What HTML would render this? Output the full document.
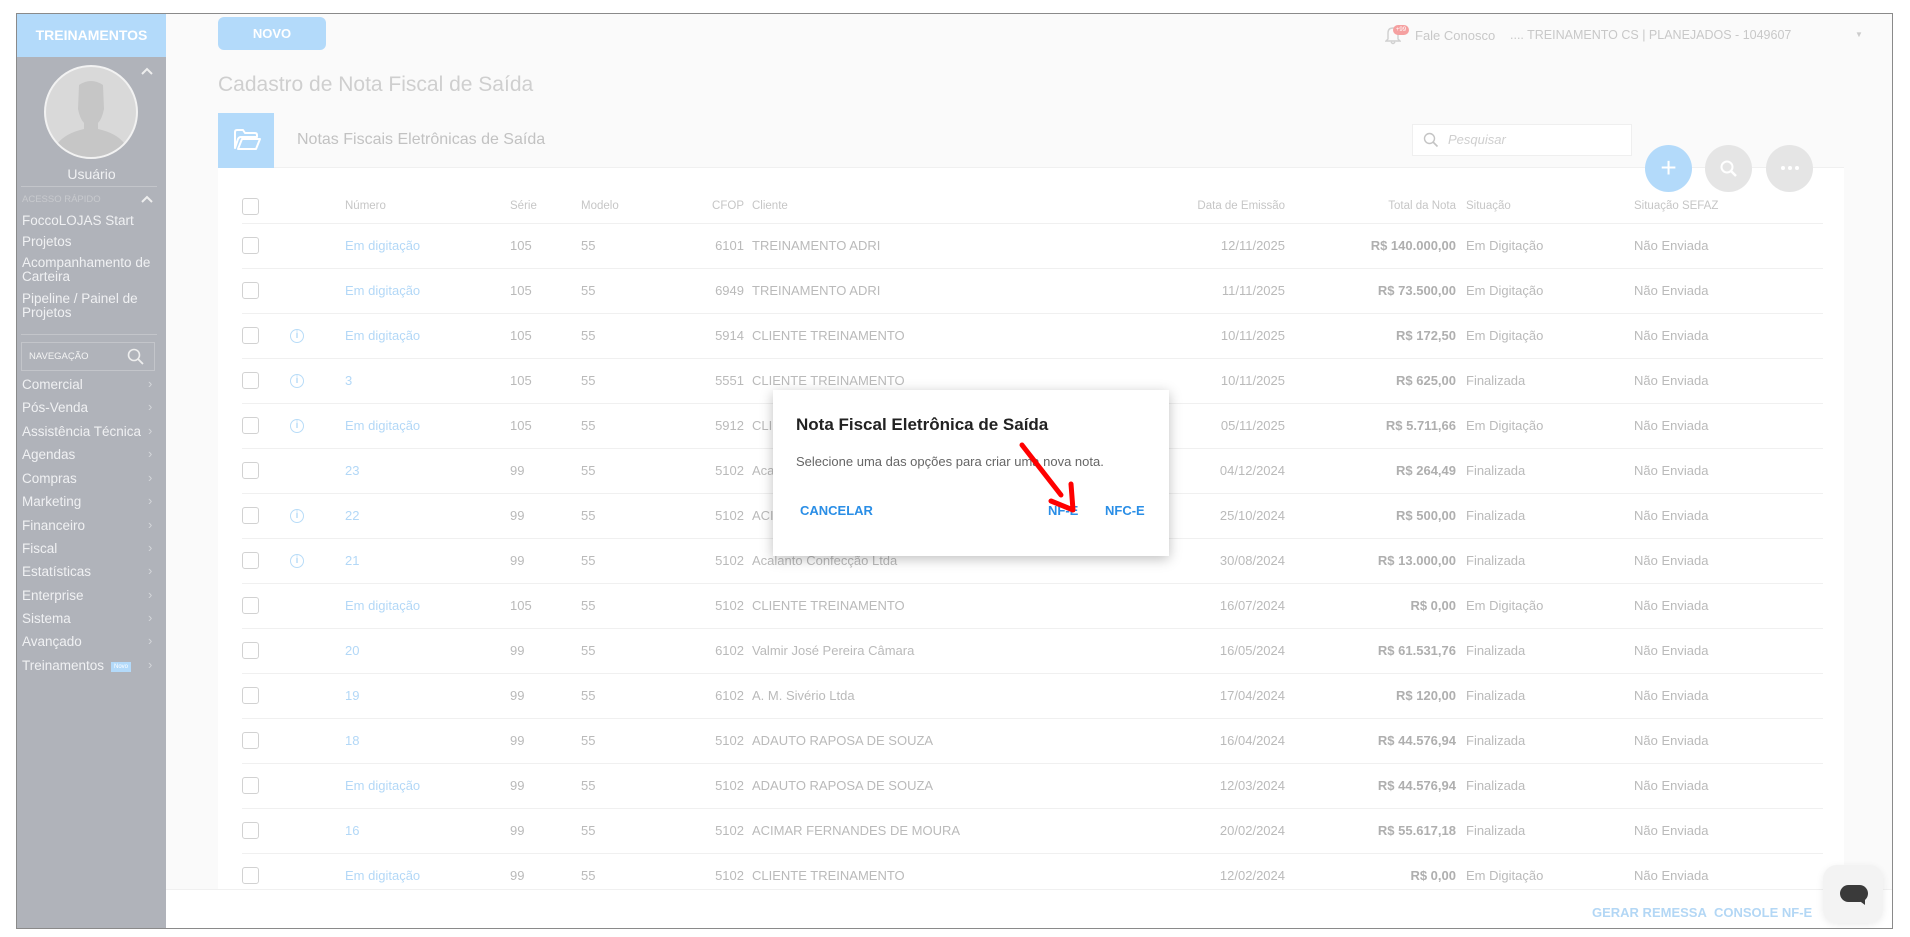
<!DOCTYPE html>
<html><head><meta charset="utf-8"><style>
*{margin:0;padding:0;box-sizing:border-box}
body{width:1910px;height:937px;background:#fff;font-family:"Liberation Sans",sans-serif;position:relative;overflow:hidden}
.a{position:absolute;white-space:nowrap}
#frame{position:absolute;left:16px;top:13px;width:1877px;height:916px;border:1px solid #8a8a8a;background:#fafafa;overflow:hidden}
.sb{color:#f0f1f3;font-size:13.5px}
.chev{position:absolute;left:131px;color:#d4d6da;font-size:13px}
.cb{position:absolute;left:225px;width:17px;height:17px;border:1.5px solid #d2d2d2;border-radius:3px;background:#fff}
.info{position:absolute;left:273px;width:14px;height:14px;border:1.3px solid #b8dcf8;border-radius:50%;color:#b8dcf8;font-size:10px;line-height:12px;text-align:center;font-weight:bold}
.t{position:absolute;font-size:13px;color:#bababa;white-space:nowrap}
.lk{color:#b3d8f7}
.r{text-align:right}
.line{position:absolute;left:225px;width:1581px;height:1px;background:#f0f0f0}
.h{position:absolute;font-size:11.5px;color:#c6c6c6;white-space:nowrap}
</style></head><body>
<div id="frame">
<div class="a" style="left:0;top:0;width:149px;height:916px;background:#b0b3ba"></div>
<div class="a" style="left:0;top:0;width:149px;height:43px;background:#b3dafa;color:#fff;font-weight:bold;font-size:14px;line-height:43px;text-align:center">TREINAMENTOS</div>
<div class="a" style="left:27px;top:51px;width:94px;height:94px;border-radius:50%;background:#d9d9d9;border:2px solid #f2f2f2;overflow:hidden">
<svg width="90" height="90" viewBox="0 0 90 90"><path d="M33 18 Q45 10 57 18 L58 42 Q56 52 52 56 L52 62 Q70 66 78 76 L78 90 L12 90 L12 76 Q20 66 38 62 L38 56 Q34 52 32 42 Z" fill="#c6c6c6"/></svg></div>
<svg class="a" style="left:124px;top:53px" width="12" height="8" viewBox="0 0 12 8"><path d="M1 7 L6 2 L11 7" stroke="#eee" stroke-width="2" fill="none"/></svg>
<div class="a sb" style="left:0;width:149px;text-align:center;top:152px;font-size:14px">Usuário</div>
<div class="a" style="left:4px;top:172px;width:136px;height:1px;background:#c3c5ca"></div>
<div class="a" style="left:5px;top:180px;font-size:9.5px;color:#c8cace">ACESSO RÁPIDO</div>
<svg class="a" style="left:124px;top:181px" width="12" height="8" viewBox="0 0 12 8"><path d="M1 7 L6 2 L11 7" stroke="#eee" stroke-width="2" fill="none"/></svg>
<div class="a sb" style="left:5px;top:199px">FoccoLOJAS Start</div>
<div class="a sb" style="left:5px;top:220px">Projetos</div>
<div class="a sb" style="left:5px;top:242px;line-height:14px">Acompanhamento de<br>Carteira</div>
<div class="a sb" style="left:5px;top:278px;line-height:14px">Pipeline / Painel de<br>Projetos</div>
<div class="a" style="left:4px;top:320px;width:136px;height:1px;background:#c3c5ca"></div>
<div class="a" style="left:4px;top:328px;width:134px;height:29px;border:1px solid #c3c5ca"></div>
<div class="a" style="left:12px;top:337px;font-size:9.5px;color:#f4f4f4">NAVEGAÇÃO</div>
<svg class="a" style="left:110px;top:334px" width="18" height="18" viewBox="0 0 18 18"><circle cx="7" cy="7" r="5.5" stroke="#eee" stroke-width="1.6" fill="none"/><path d="M11 11 L16 16" stroke="#eee" stroke-width="1.8"/></svg>
<div class="a sb" style="left:5px;top:363px">Comercial</div><div class="chev" style="top:362px">›</div>
<div class="a sb" style="left:5px;top:386px">Pós-Venda</div><div class="chev" style="top:385px">›</div>
<div class="a sb" style="left:5px;top:410px">Assistência Técnica</div><div class="chev" style="top:409px">›</div>
<div class="a sb" style="left:5px;top:433px">Agendas</div><div class="chev" style="top:432px">›</div>
<div class="a sb" style="left:5px;top:457px">Compras</div><div class="chev" style="top:456px">›</div>
<div class="a sb" style="left:5px;top:480px">Marketing</div><div class="chev" style="top:479px">›</div>
<div class="a sb" style="left:5px;top:504px">Financeiro</div><div class="chev" style="top:503px">›</div>
<div class="a sb" style="left:5px;top:527px">Fiscal</div><div class="chev" style="top:526px">›</div>
<div class="a sb" style="left:5px;top:550px">Estatísticas</div><div class="chev" style="top:549px">›</div>
<div class="a sb" style="left:5px;top:574px">Enterprise</div><div class="chev" style="top:573px">›</div>
<div class="a sb" style="left:5px;top:597px">Sistema</div><div class="chev" style="top:596px">›</div>
<div class="a sb" style="left:5px;top:620px">Avançado</div><div class="chev" style="top:619px">›</div>
<div class="a sb" style="left:5px;top:644px">Treinamentos</div><div class="a" style="left:94px;top:648px;width:20px;height:10px;background:#b3dafa;color:#fff;font-size:6px;line-height:10px;text-align:center">Novo</div><div class="chev" style="top:643px">›</div>
<div class="a" style="left:149px;top:0;width:1728px;height:43px;background:#fafafa"></div>
<div class="a" style="left:201px;top:3px;width:108px;height:33px;background:#b3dafa;border-radius:6px;color:#fff;font-weight:bold;font-size:13px;line-height:33px;text-align:center">NOVO</div>
<svg class="a" style="left:1368px;top:11px" width="16" height="20" viewBox="0 0 16 20"><path d="M3 14 L3 8 Q3 3 8 3 Q13 3 13 8 L13 14 L15 16 L1 16 Z M6 17 Q8 20 10 17" stroke="#d0d0d0" stroke-width="1.4" fill="none"/></svg>
<div class="a" style="left:1376px;top:11px;width:16px;height:10px;background:#f5a0a0;border-radius:5px;color:#fff;font-size:6px;line-height:10px;text-align:center">+99</div>
<div class="a" style="left:1398px;top:14px;font-size:13px;color:#c8c8c8">Fale Conosco</div>
<div class="a" style="left:1493px;top:14px;font-size:12.5px;color:#c8c8c8">.... TREINAMENTO CS | PLANEJADOS - 1049607</div>
<div class="a" style="left:1838px;top:16px;font-size:8px;color:#ccc">▼</div>
<div class="a" style="left:201px;top:59px;font-size:21px;color:#cfcfcf">Cadastro de Nota Fiscal de Saída</div>
<div class="a" style="left:201px;top:99px;width:1626px;height:790px;background:#fff"></div>
<div class="a" style="left:201px;top:99px;width:1626px;height:55px;background:#fafafa;border-bottom:1px solid #f0f0f0"></div>
<div class="a" style="left:201px;top:99px;width:56px;height:55px;background:#b3dafa"></div>
<svg class="a" style="left:216px;top:114px" width="28" height="24" viewBox="0 0 28 24"><path d="M2 4 Q2 2 4 2 L10 2 L12 5 L22 5 Q24 5 24 7 L24 9 L8 9 Q6 9 5 11 L2 20 Z M5 21 L9 11 L27 11 L23 21 Z" fill="none" stroke="#fff" stroke-width="2" stroke-linejoin="round"/></svg>
<div class="a" style="left:280px;top:117px;font-size:16px;color:#c2c2c2">Notas Fiscais Eletrônicas de Saída</div>
<div class="a" style="left:1395px;top:110px;width:220px;height:32px;border:1px solid #efefef;background:#fff"></div>
<svg class="a" style="left:1406px;top:118px" width="16" height="16" viewBox="0 0 16 16"><circle cx="6.5" cy="6.5" r="5" stroke="#c4c4c4" stroke-width="1.4" fill="none"/><path d="M10 10 L14.5 14.5" stroke="#c4c4c4" stroke-width="1.6"/></svg>
<div class="a" style="left:1431px;top:118px;font-size:13px;color:#cfcfcf;font-style:italic">Pesquisar</div>
<div class="a" style="left:1628px;top:131px;width:47px;height:47px;border-radius:50%;background:#b3dafa;color:#fff;font-size:28px;line-height:45px;text-align:center">+</div>
<div class="a" style="left:1688px;top:131px;width:47px;height:47px;border-radius:50%;background:#e5e5e5"></div>
<svg class="a" style="left:1702px;top:145px" width="20" height="20" viewBox="0 0 20 20"><circle cx="8" cy="8" r="5.5" stroke="#fff" stroke-width="2" fill="none"/><path d="M12 12 L17 17" stroke="#fff" stroke-width="2.4"/></svg>
<div class="a" style="left:1749px;top:131px;width:47px;height:47px;border-radius:50%;background:#e5e5e5"></div>
<svg class="a" style="left:1762px;top:151px" width="22" height="6" viewBox="0 0 22 6"><circle cx="4" cy="3" r="2" fill="#fff"/><circle cx="11" cy="3" r="2" fill="#fff"/><circle cx="18" cy="3" r="2" fill="#fff"/></svg>
<div class="cb" style="top:184px"></div>
<div class="h" style="left:328px;top:186px">Número</div>
<div class="h" style="left:493px;top:186px">Série</div>
<div class="h" style="left:564px;top:186px">Modelo</div>
<div class="h r" style="left:680px;width:47px;top:186px">CFOP</div>
<div class="h" style="left:735px;top:186px">Cliente</div>
<div class="h r" style="left:1068px;width:200px;top:186px">Data de Emissão</div>
<div class="h r" style="left:1240px;width:199px;top:186px">Total da Nota</div>
<div class="h" style="left:1449px;top:186px">Situação</div>
<div class="h" style="left:1617px;top:186px">Situação SEFAZ</div>
<div id="rows"></div>
<div class="a" style="left:149px;top:875px;width:1728px;height:41px;background:#fff;border-top:1px solid #f0f0f0"></div>
<div class="a" style="left:1575px;top:891px;font-size:13px;font-weight:bold;color:#b3d7f5">GERAR REMESSA</div>
<div class="a" style="left:1697px;top:891px;font-size:13px;font-weight:bold;color:#b3d7f5">CONSOLE NF-E</div>
<div class="a" style="left:1806px;top:851px;width:60px;height:58px;border-radius:14px;background:#f3f3f3;box-shadow:0 2px 8px rgba(0,0,0,0.08)"></div>
<div class="a" style="left:1823px;top:871px;width:28px;height:17px;border-radius:9px;background:#3a3a3a"></div>
<svg class="a" style="left:1840px;top:885px" width="8" height="6" viewBox="0 0 8 6"><path d="M0 0 L8 0 L8 6 Z" fill="#3a3a3a"/></svg>
<div class="a" style="left:756px;top:376px;width:396px;height:166px;background:#fff;box-shadow:0 3px 12px rgba(0,0,0,0.25)"></div>
<div class="a" style="left:779px;top:401px;font-size:17px;font-weight:bold;color:#222">Nota Fiscal Eletrônica de Saída</div>
<div class="a" style="left:779px;top:440px;font-size:13px;color:#666">Selecione uma das opções para criar uma nova nota.</div>
<div class="a" style="left:783px;top:489px;font-size:13px;font-weight:bold;color:#2a8ee6">CANCELAR</div>
<div class="a" style="left:1031px;top:489px;font-size:13px;font-weight:bold;color:#2a8ee6">NF-E</div>
<div class="a" style="left:1088px;top:489px;font-size:13px;font-weight:bold;color:#2a8ee6">NFC-E</div>
<svg class="a" style="left:990px;top:425px" width="80" height="80" viewBox="0 0 80 80"><path d="M15 6 L54 56" stroke="#f00" stroke-width="5" stroke-linecap="round"/><path d="M44 62 L66 71 L64 45" stroke="#f00" stroke-width="5" fill="none" stroke-linecap="round" stroke-linejoin="round"/></svg>
</div>
<script>
var d=[["Em digitação","105","6101","TREINAMENTO ADRI","12/11/2025","140.000,00","Em Digitação",0],
["Em digitação","105","6949","TREINAMENTO ADRI","11/11/2025","73.500,00","Em Digitação",0],
["Em digitação","105","5914","CLIENTE TREINAMENTO","10/11/2025","172,50","Em Digitação",1],
["3","105","5551","CLIENTE TREINAMENTO","10/11/2025","625,00","Finalizada",1],
["Em digitação","105","5912","CLIENTE TREINAMENTO","05/11/2025","5.711,66","Em Digitação",1],
["23","99","5102","Acalanto Confecção Ltda","04/12/2024","264,49","Finalizada",0],
["22","99","5102","ACIMAR FERNANDES DE MOURA","25/10/2024","500,00","Finalizada",1],
["21","99","5102","Acalanto Confecção Ltda","30/08/2024","13.000,00","Finalizada",1],
["Em digitação","105","5102","CLIENTE TREINAMENTO","16/07/2024","0,00","Em Digitação",0],
["20","99","6102","Valmir José Pereira Câmara","16/05/2024","61.531,76","Finalizada",0],
["19","99","6102","A. M. Sivério Ltda","17/04/2024","120,00","Finalizada",0],
["18","99","5102","ADAUTO RAPOSA DE SOUZA","16/04/2024","44.576,94","Finalizada",0],
["Em digitação","99","5102","ADAUTO RAPOSA DE SOUZA","12/03/2024","44.576,94","Finalizada",0],
["16","99","5102","ACIMAR FERNANDES DE MOURA","20/02/2024","55.617,18","Finalizada",0],
["Em digitação","99","5102","CLIENTE TREINAMENTO","12/02/2024","0,00","Em Digitação",0]];
var h="";
d.forEach(function(r,i){var y=232+45*i,ln=209+45*i;
h+='<div class="line" style="top:'+ln+'px"></div><div class="cb" style="top:'+(y-9)+'px"></div>';
if(r[7])h+='<div class="info" style="top:'+(y-7)+'px">i</div>';
h+='<div class="t lk" style="left:328px;top:'+(y-8)+'px">'+r[0]+'</div>'+
'<div class="t" style="left:493px;top:'+(y-8)+'px">'+r[1]+'</div>'+
'<div class="t" style="left:564px;top:'+(y-8)+'px">55</div>'+
'<div class="t r" style="left:680px;width:47px;top:'+(y-8)+'px">'+r[2]+'</div>'+
'<div class="t" style="left:735px;top:'+(y-8)+'px">'+r[3]+'</div>'+
'<div class="t r" style="left:1068px;width:200px;top:'+(y-8)+'px">'+r[4]+'</div>'+
'<div class="t r" style="left:1240px;width:199px;top:'+(y-8)+'px"><b style="font-weight:bold;color:#afafaf">R$ '+r[5]+'</b></div>'+
'<div class="t" style="left:1449px;top:'+(y-8)+'px">'+r[6]+'</div>'+
'<div class="t" style="left:1617px;top:'+(y-8)+'px">Não Enviada</div>';});
document.getElementById("rows").outerHTML=h;
</script>
</body></html>
